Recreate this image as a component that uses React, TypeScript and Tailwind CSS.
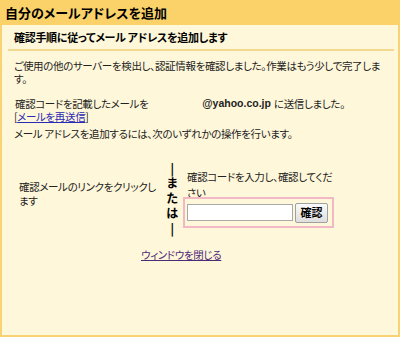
import React from "react";

export default function App() {
  const font = {
    fontFamily: '"MS PGothic", "Noto Sans CJK JP", "Liberation Sans", sans-serif',
    fontFeatureSettings: '"palt"',
  } as React.CSSProperties;
  return (
    <div className="w-[400px] h-[337px] bg-[#fff7d9] text-[#222] flex flex-col overflow-hidden" style={font}>
      <div className="h-[25px] shrink-0 bg-[#fbd26a] px-[5px] flex items-center text-[13px] font-bold text-black leading-none">
        自分のメールアドレスを追加
      </div>
      <div className="flex-1 border-l-2 border-r-2 border-b-2 border-[#f9d373] flex flex-col">
        <div className="mr-[4px] ml-[6px] border-b-2 border-[#f3d88f] h-[26px] flex items-center pl-[6px] text-[11px] font-bold leading-none text-black tracking-[-0.3px]">
          確認手順に従ってメール アドレスを追加します
        </div>
        <div className="px-[12px] pt-[8px] text-[10.5px] leading-[13px] text-[#222] tracking-[-0.35px]">
          <p>
            ご使用の他のサーバーを検出し、認証情報を確認しました。作業はもう少しで完了しま
            <br />す。
          </p>
          <p className="flex mt-[12px]">
            <span className="pl-[1px]">確認コードを記載したメールを</span>
            <span className="ml-[54px] font-bold tracking-normal text-[10.5px]" style={{ fontFamily: '"Liberation Sans", Arial, sans-serif' }}>
              @yahoo.co.jp
            </span>
            <span className="ml-[3px]">に送信しました。</span>
          </p>
          <p>
            [<a className="text-[#2a2ab5] underline">メールを再送信</a>]
          </p>
          <p className="mt-[4px]">メール アドレスを追加するには、次のいずれかの操作を行います。</p>
          <div className="flex mt-[20px]">
            <div className="w-[148px] pl-[5px] pt-[20px]">
              <p className="leading-[14px]">
                確認メールのリンクをクリックし
                <br />
                ます
              </p>
            </div>
            <div className="w-[20px] flex flex-col items-center font-bold text-[12px] leading-[15px] text-black">
              <span>|</span>
              <span>ま</span>
              <span>た</span>
              <span>は</span>
              <span>|</span>
            </div>
            <div className="flex flex-col pt-[9px] ml-[1px]">
              <p className="pl-[4px] leading-[16px]">
                確認コードを入力し、確認してくだ
                <br />
                さい
              </p>
              <div className="w-[151px] h-[31px] border-2 border-[#f2b8c6] -mt-[4px] flex items-center pl-[2px] gap-[2px]">
                <div className="w-[106px] h-[17px] bg-white border border-[#a9a9a9]" />
                <button className="w-[33px] h-[20px] border border-[#a0a0a0] rounded-[2px] bg-gradient-to-b from-[#fafafa] to-[#dedede] text-[11px] font-bold text-black leading-none tracking-normal">
                  確認
                </button>
              </div>
            </div>
          </div>
          <div className="mt-[13px] pl-[127px]">
            <a className="text-[#4b2a78] underline">ウィンドウを閉じる</a>
          </div>
        </div>
      </div>
    </div>
  );
}
